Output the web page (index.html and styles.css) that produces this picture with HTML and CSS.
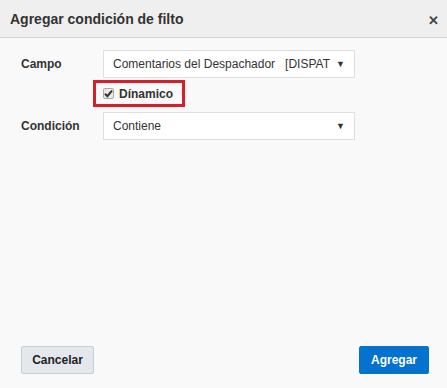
FILE: index.html
```html
<!DOCTYPE html>
<html lang="es">
<head>
    <meta charset="UTF-8">
    <meta name="viewport" content="width=device-width, initial-scale=1.0">
    <title>Agregar condición de filto</title>
    <link rel="stylesheet" href="styles.css">
</head>
<body>
    <div class="dialog">
        <div class="dialog-header">
            <h1>Agregar condición de filto</h1>
            <span class="close">&#x2715;</span>
        </div>
        <div class="dialog-body">
            <div class="row">
                <label>Campo</label>
                <div class="select">
                    <span class="value">Comentarios del Despachador &nbsp; [DISPAT</span>
                    <span class="arrow">&#9660;</span>
                </div>
            </div>
            <div class="check-row">
                <div class="highlight">
                    <span class="checkbox">
                        <svg width="9" height="9" viewBox="0 0 9 9"><path d="M1 4.8 L3.4 7.2 L8 1.6" fill="none" stroke="#333" stroke-width="2"/></svg>
                    </span>
                    <span class="check-label">Dínamico</span>
                </div>
            </div>
            <div class="row">
                <label>Condición</label>
                <div class="select">
                    <span class="value">Contiene</span>
                    <span class="arrow">&#9660;</span>
                </div>
            </div>
        </div>
        <div class="dialog-footer">
            <button class="btn">Cancelar</button>
            <button class="btn primary">Agregar</button>
        </div>
    </div>
</body>
</html>
```

FILE: styles.css
```css
body {
    margin: 0;
    font-family: "Liberation Sans", Arial, sans-serif;
    color: #333;
    background: #f9f9f9;
}
.dialog {
    width: 447px;
    height: 388px;
    display: flex;
    flex-direction: column;
    background: #f9f9f9;
}
.dialog-header {
    height: 37px;
    background: #efefef;
    border-bottom: 1px solid #d6d6d6;
    display: flex;
    align-items: center;
    justify-content: space-between;
    padding: 0 8px 0 10px;
}
.dialog-header h1 {
    margin: 0;
    font-size: 14px;
    font-weight: bold;
    color: #333;
}
.close {
    font-size: 13px;
    font-weight: bold;
    color: #444;
    margin-top: 4px;
}
.dialog-body {
    flex: 1;
    padding: 12px 0 0 21px;
}
.row {
    display: flex;
    align-items: center;
}
.row label {
    width: 82px;
    font-size: 12px;
    font-weight: bold;
}
.select {
    width: 232px;
    height: 26px;
    background: #fff;
    border: 1px solid #dfdfdf;
    display: flex;
    align-items: center;
    padding: 0 9px 0 9px;
    font-size: 12px;
    color: #333;
    box-sizing: content-box;
}
.value {
    flex: 1;
    white-space: nowrap;
}
.arrow {
    font-size: 9px;
    color: #333;
}
.check-row {
    display: flex;
    padding: 2px 0 5px 72px;
}
.highlight {
    display: flex;
    align-items: center;
    border: 3px solid #d3202a;
    height: 27px;
    width: 92px;
    padding-left: 7px;
    box-sizing: border-box;
}
.checkbox {
    width: 11px;
    height: 11px;
    border: 1px solid #aaa;
    border-radius: 2px;
    background: #e9e9e9;
    display: flex;
    align-items: center;
    justify-content: center;
    margin-right: 5px;
    box-sizing: border-box;
}
.check-label {
    font-size: 12px;
    font-weight: bold;
    color: #333;
}
.dialog-footer {
    display: flex;
    justify-content: space-between;
    padding: 0 18px 14px 21px;
}
.btn {
    height: 28px;
    width: 73px;
    font-family: "Liberation Sans", Arial, sans-serif;
    font-size: 12px;
    font-weight: bold;
    color: #222;
    background: #e4e8ec;
    border: 1px solid #c4ced7;
    border-radius: 2px;
    padding: 0;
}
.btn.primary {
    background: #0572ce;
    border-color: #0572ce;
    color: #fff;
    width: 70px;
}
```
